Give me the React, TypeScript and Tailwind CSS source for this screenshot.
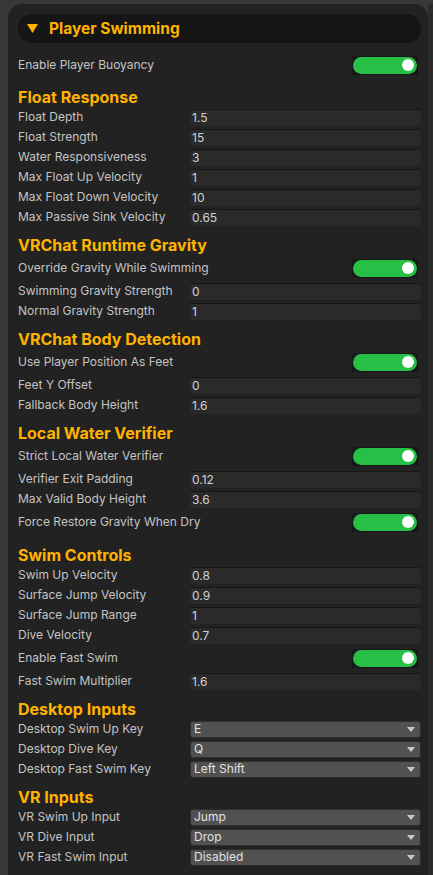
import React from 'react';

type Row =
  | { kind: 'num'; label: string; value: string }
  | { kind: 'toggle'; label: string }
  | { kind: 'select'; label: string; value: string };

type Section = { title: string; extra?: string; rows: Row[] };

const sections: Section[] = [
  {
    title: 'Float Response',
    extra: 'mt-[1px]',
    rows: [
      { kind: 'num', label: 'Float Depth', value: '1.5' },
      { kind: 'num', label: 'Float Strength', value: '15' },
      { kind: 'num', label: 'Water Responsiveness', value: '3' },
      { kind: 'num', label: 'Max Float Up Velocity', value: '1' },
      { kind: 'num', label: 'Max Float Down Velocity', value: '10' },
      { kind: 'num', label: 'Max Passive Sink Velocity', value: '0.65' },
    ],
  },
  {
    title: 'VRChat Runtime Gravity',
    rows: [
      { kind: 'toggle', label: 'Override Gravity While Swimming' },
      { kind: 'num', label: 'Swimming Gravity Strength', value: '0' },
      { kind: 'num', label: 'Normal Gravity Strength', value: '1' },
    ],
  },
  {
    title: 'VRChat Body Detection',
    rows: [
      { kind: 'toggle', label: 'Use Player Position As Feet' },
      { kind: 'num', label: 'Feet Y Offset', value: '0' },
      { kind: 'num', label: 'Fallback Body Height', value: '1.6' },
    ],
  },
  {
    title: 'Local Water Verifier',
    rows: [
      { kind: 'toggle', label: 'Strict Local Water Verifier' },
      { kind: 'num', label: 'Verifier Exit Padding', value: '0.12' },
      { kind: 'num', label: 'Max Valid Body Height', value: '3.6' },
      { kind: 'toggle', label: 'Force Restore Gravity When Dry' },
    ],
  },
  {
    title: 'Swim Controls',
    extra: 'mt-[2px]',
    rows: [
      { kind: 'num', label: 'Swim Up Velocity', value: '0.8' },
      { kind: 'num', label: 'Surface Jump Velocity', value: '0.9' },
      { kind: 'num', label: 'Surface Jump Range', value: '1' },
      { kind: 'num', label: 'Dive Velocity', value: '0.7' },
      { kind: 'toggle', label: 'Enable Fast Swim' },
      { kind: 'num', label: 'Fast Swim Multiplier', value: '1.6' },
    ],
  },
  {
    title: 'Desktop Inputs',
    rows: [
      { kind: 'select', label: 'Desktop Swim Up Key', value: 'E' },
      { kind: 'select', label: 'Desktop Dive Key', value: 'Q' },
      { kind: 'select', label: 'Desktop Fast Swim Key', value: 'Left Shift' },
    ],
  },
  {
    title: 'VR Inputs',
    rows: [
      { kind: 'select', label: 'VR Swim Up Input', value: 'Jump' },
      { kind: 'select', label: 'VR Dive Input', value: 'Drop' },
      { kind: 'select', label: 'VR Fast Swim Input', value: 'Disabled' },
    ],
  },
];

function Toggle() {
  return (
    <div className="w-[66px] h-[19px] bg-[#181818] p-[1px] mr-[3px]">
      <div className="h-full w-full rounded-full bg-[#27bf45] flex items-center justify-end pr-[3px]">
        <div className="w-[12px] h-[12px] rounded-full bg-white" />
      </div>
    </div>
  );
}

function FieldRow({ row }: { row: Row }) {
  if (row.kind === 'toggle') {
    return (
      <div className="h-[26px] flex items-center justify-between">
        <span className="text-[12px] text-[#c4c4c4]">{row.label}</span>
        <Toggle />
      </div>
    );
  }
  return (
    <div className="h-[20px] flex items-center">
      <span className="w-[172px] shrink-0 text-[12px] text-[#c4c4c4] whitespace-nowrap">{row.label}</span>
      {row.kind === 'num' ? (
        <div className="flex-1 h-[17px] bg-[#2a2a2a] border-t border-[#161616] rounded-[3px] pl-[2px] flex items-center text-[12px] text-[#d2d2d2]">
          {row.value}
        </div>
      ) : (
        <div className="flex-1 h-[17px] bg-[#515151] border border-[#2e2e2e] rounded-[3px] pl-[3px] pr-[5px] flex items-center justify-between text-[12px] text-[#e2e2e2]">
          <span>{row.value}</span>
          <svg width="8" height="5" viewBox="0 0 8 5"><path d="M0 0H8L4 5Z" fill="#c8c8c8" /></svg>
        </div>
      )}
    </div>
  );
}

export default function App() {
  return (
    <div className="h-[875px] overflow-hidden bg-[#383838] flex pt-[4px] pl-[8px]" style={{ fontFamily: 'Inter, "Noto Sans", sans-serif' }}>
      <div className="w-[420px] shrink-0 bg-[#222222] rounded-t-[14px] pl-[10px] pr-[7px] pt-[10px]">
        <div className="h-[29px] bg-[#151515] rounded-[14px] flex items-center pl-[9px] gap-[11px]">
          <svg width="11" height="9" viewBox="0 0 11 9"><path d="M0 0H11L5.5 9Z" fill="#ffb300" /></svg>
          <span className="text-[15.5px] font-bold text-[#ffb300]">Player Swimming</span>
        </div>
        <div className="mt-[9px]">
          <FieldRow row={{ kind: 'toggle', label: 'Enable Player Buoyancy' }} />
        </div>
        {sections.map((s) => (
          <div key={s.title} className={s.extra}>
            <div className="h-[28px] pt-[8px]">
              <div className="leading-[20px] text-[16px] font-bold text-[#ffb300]">{s.title}</div>
            </div>
            {s.rows.map((r) => (
              <FieldRow key={r.label} row={r} />
            ))}
          </div>
        ))}
      </div>
      <div className="flex-1 bg-[#2a2a2a]" />
    </div>
  );
}
